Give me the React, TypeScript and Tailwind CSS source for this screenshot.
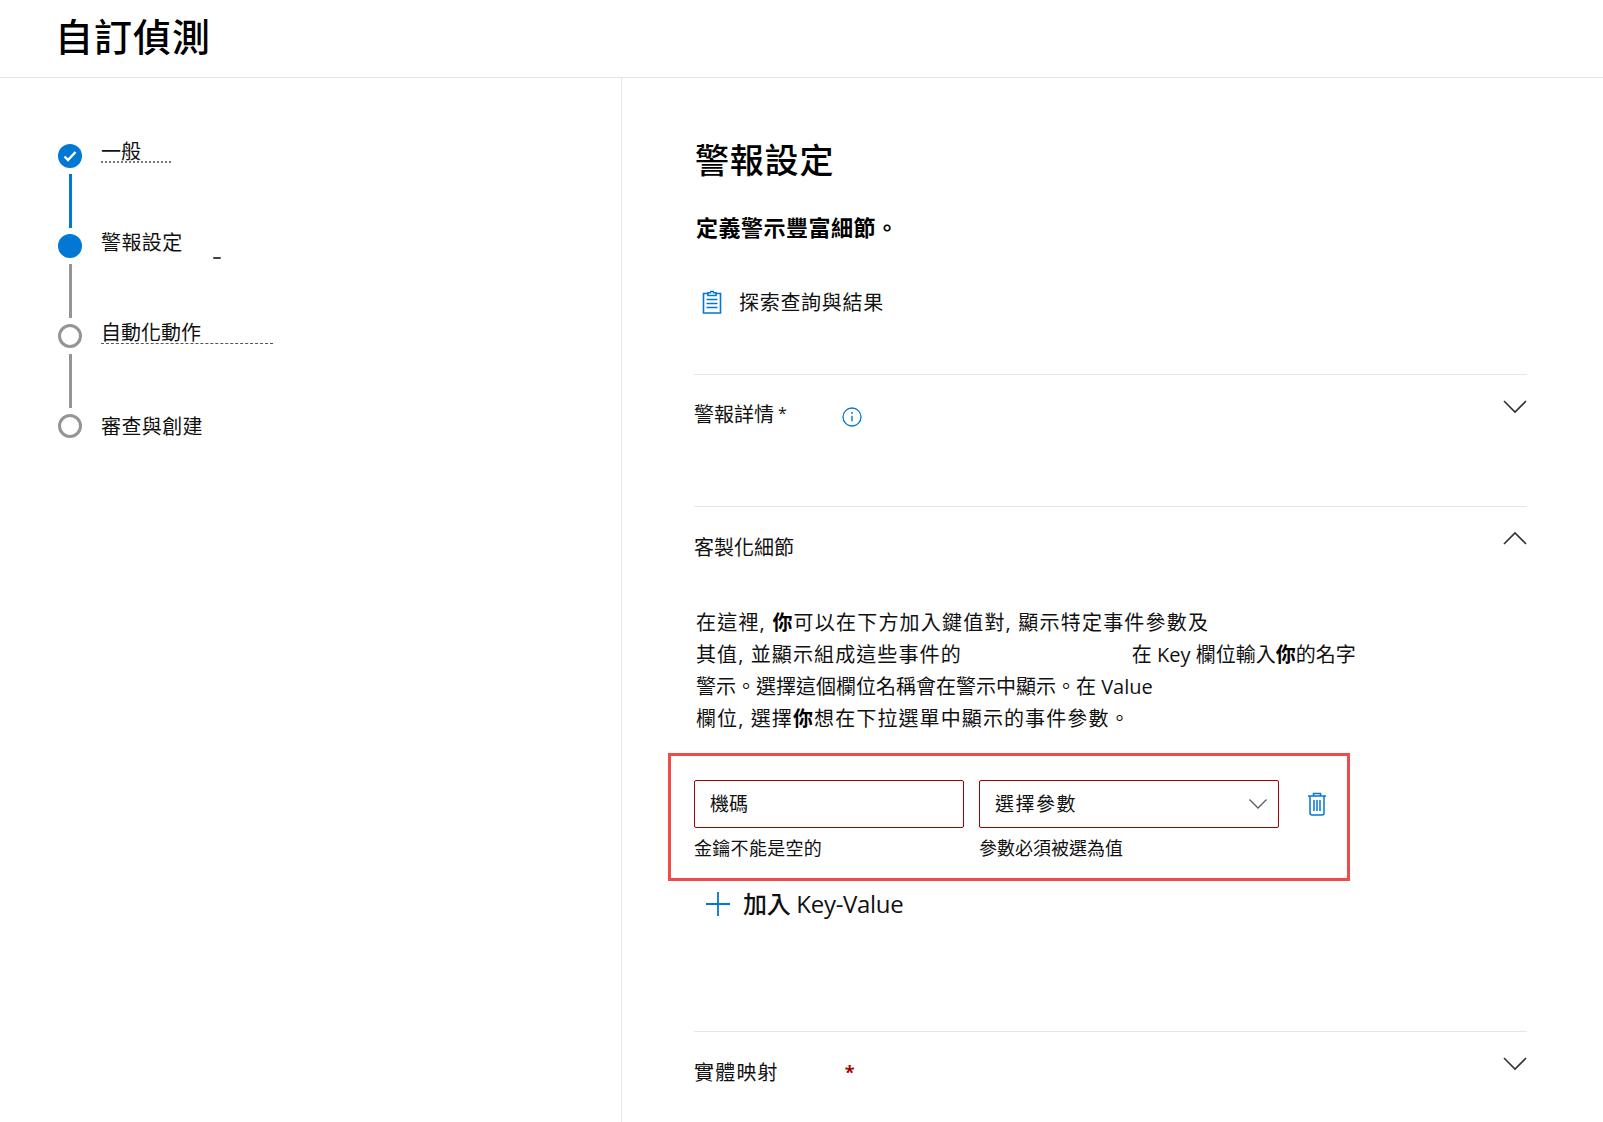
import { ReactNode } from 'react';

const FONT = 'font-["Open_Sans","Noto_Sans_CJK_TC",sans-serif]';

const Chevron = ({ up = false }: { up?: boolean }): JSX.Element => (
  <svg width="26" height="16" viewBox="0 0 26 16" fill="none" stroke="#323130" strokeWidth="1.6" className="-mr-[1px]">
    <path d={up ? 'M2 14 13 3l11 11' : 'M2 2l11 11L24 2'} />
  </svg>
);

const ClipboardIcon = (): JSX.Element => (
  <svg width="20" height="24" viewBox="0 0 20 24" fill="none" stroke="#0078d4" strokeWidth="1.6">
    <path d="M6 3.5H1.5v19.5h17V3.5H14" />
    <path d="M6 5.5V2.8h2.4a1.6 1.6 0 0 1 3.2 0H14v2.7z" />
    <path d="M4.5 9.5h11M4.5 13.5h11M4.5 17.5h11" strokeWidth="1.3" />
  </svg>
);

const InfoIcon = (): JSX.Element => (
  <svg width="20" height="20" viewBox="0 0 20 20" fill="none">
    <circle cx="10" cy="10" r="9" stroke="#0078d4" strokeWidth="1.3" />
    <path d="M10 8.8v5.4" stroke="#0078d4" strokeWidth="1.4" />
    <circle cx="10" cy="6" r="0.9" fill="#0078d4" />
  </svg>
);

const TrashIcon = (): JSX.Element => (
  <svg width="20" height="24" viewBox="0 0 20 24" fill="none" stroke="#0078d4" strokeWidth="1.5">
    <path d="M1 4h18M6.5 4V1.5h7V4" />
    <path d="M3 4v17a2 2 0 0 0 2 2h10a2 2 0 0 0 2-2V4" />
    <path d="M7 8v11M10 8v11M13 8v11" />
  </svg>
);

type Step = {
  label: string;
  state: 'done' | 'current' | 'todo';
  labelClass: string;
  trace?: ReactNode;
};

// leftovers of the untranslated labels under the steps
const STEPS: Step[] = [
  {
    label: '一般',
    state: 'done',
    labelClass: '-translate-y-[4px]',
    trace: <span className="absolute left-0 top-[17px] w-[70px] border-b-2 border-dotted border-[#777]" />,
  },
  {
    label: '警報設定',
    state: 'current',
    labelClass: '-translate-y-[3px] tracking-[0.4px]',
    trace: <span className="absolute left-[112px] top-[23px] h-[2px] w-[8px] rounded-sm bg-[#444]" />,
  },
  {
    label: '自動化動作',
    state: 'todo',
    labelClass: '-translate-y-[3px]',
    trace: <span className="absolute left-0 top-[19px] w-[172px] border-b border-dashed border-[#555]" />,
  },
  { label: '審查與創建', state: 'todo', labelClass: 'translate-y-[1px] tracking-[0.4px]' },
];

const Stepper = (): JSX.Element => (
  <div className="flex flex-col">
    {STEPS.map((step, index) => (
      <div key={step.label} className="flex gap-[19px]">
        <div className="flex w-[24px] flex-col items-center">
          {step.state === 'done' && (
            <div className="flex h-[24px] w-[24px] items-center justify-center rounded-full bg-[#0078d4]">
              <svg width="14" height="12" viewBox="0 0 14 12" fill="none" stroke="#fff" strokeWidth="2.4">
                <path d="M1.5 6.5 5 10l7.5-8" />
              </svg>
            </div>
          )}
          {step.state === 'current' && <div className="h-[24px] w-[24px] rounded-full bg-[#0078d4]" />}
          {step.state === 'todo' && <div className="h-[24px] w-[24px] rounded-full border-[3px] border-[#979593]" />}
          {index < STEPS.length - 1 && (
            <div className={`mt-[6px] mb-[6px] h-[54px] w-[3px] ${index === 0 ? 'bg-[#0078d4]' : 'bg-[#979593]'}`} />
          )}
        </div>
        <div className="relative h-[24px] flex-1">
          <span className={`block text-[20px] leading-[24px] text-[#111] ${step.labelClass}`}>{step.label}</span>
          {step.trace}
        </div>
      </div>
    ))}
  </div>
);

const Strong = ({ children }: { children: ReactNode }): JSX.Element => (
  <span className="font-bold text-black">{children}</span>
);

const App = (): JSX.Element => (
  <div className={`flex h-[1122px] w-full flex-col overflow-hidden bg-white text-[#111] ${FONT}`}>
    <header className="h-[78px] shrink-0 border-b border-[#e6e6e6] pl-[55px] pt-[12px]">
      <h1 className="text-[38px] font-medium leading-[48px] tracking-[1px] text-black">自訂偵測</h1>
    </header>
    <div className="flex min-h-0 flex-1">
      <aside className="w-[622px] shrink-0 border-r border-[#e6e6e6] pl-[58px] pt-[66px]">
        <Stepper />
      </aside>
      <main className="w-[905px] pl-[72px] pt-[62px]">
        <h2 className="pl-[1px] text-[34px] font-medium leading-[40px] tracking-[0.8px] text-black">警報設定</h2>
        <p className="mt-[31px] pl-[2px] text-[22px] font-semibold leading-[32px] tracking-[0.5px] text-black">定義警示豐富細節。</p>
        <div className="mt-[43px] flex h-[32px] items-center gap-[17px] pl-[8px]">
          <ClipboardIcon />
          <span className="translate-y-[1px] text-[20px] leading-[32px] tracking-[0.7px]">探索查詢與結果</span>
        </div>

        <section className="mt-[56px] h-[132px] border-t border-[#e6e6e6] pt-[24px]">
          <div className="flex items-start justify-between">
            <div className="flex h-[32px] items-center">
              <span className="text-[20px] leading-[32px]">警報詳情</span>
              <span className="ml-[4px] -mt-[4px] text-[16px] leading-[32px]">*</span>
              <span className="ml-[55px] mt-[3px]">
                <InfoIcon />
              </span>
            </div>
            <Chevron />
          </div>
        </section>

        <section className="border-t border-[#e6e6e6] pt-[25px]">
          <div className="flex items-start justify-between">
            <span className="text-[20px] leading-[32px]">客製化細節</span>
            <span className="-mt-[2px]">
              <Chevron up />
            </span>
          </div>
          <div className="mt-[43px] pl-[2px] text-[20px] leading-[32px]">
            <p className="tracking-[1.2px]">
              在這裡, <Strong>你</Strong>可以在下方加入鍵值對, 顯示特定事件參數及
            </p>
            <p className="tracking-[1.1px]">
              其值, 並顯示組成這些事件的
              <span className="inline-block w-[170px]" />
              <span className="tracking-normal">
                在 Key 欄位輸入<Strong>你</Strong>的名字
              </span>
            </p>
            <p className="tracking-normal">警示。選擇這個欄位名稱會在警示中顯示。在 Value</p>
            <p className="tracking-[1.1px]">
              欄位, 選擇<Strong>你</Strong>想在下拉選單中顯示的事件參數。
            </p>
          </div>

          <div className="-ml-[26px] mt-[18px] flex h-[128px] w-[682px] items-start border-[3px] border-[#f04a4a] pl-[23px] pt-[24px]">
            <div className="w-[270px]">
              <div className="flex h-[48px] items-center rounded-[2px] border border-[#a00000] pl-[15px] text-[19px]">
                機碼
              </div>
              <p className="mt-[6px] text-[18px] leading-[28px] tracking-[0.3px]">金鑰不能是空的</p>
            </div>
            <div className="ml-[15px] w-[300px]">
              <div className="flex h-[48px] items-center justify-between rounded-[2px] border border-[#a00000] pl-[15px] pr-[10px] text-[19px] tracking-[1.5px]">
                選擇參數
                <svg width="20" height="12" viewBox="0 0 20 12" fill="none" stroke="#605e5c" strokeWidth="1.3">
                  <path d="M1.5 1.5 10 10l8.5-8.5" />
                </svg>
              </div>
              <p className="mt-[6px] text-[18px] leading-[28px]">參數必須被選為值</p>
            </div>
            <div className="ml-[28px] mt-[12px]">
              <TrashIcon />
            </div>
          </div>

          <div className="mt-[7px] flex h-[32px] items-center gap-[12px] pl-[11px]">
            <svg width="26" height="26" viewBox="0 0 26 26" fill="none" stroke="#0078d4" strokeWidth="1.8">
              <path d="M13 1v24M1 13h24" />
            </svg>
            <span className="text-[24px] font-medium leading-[32px] tracking-[-0.3px]">加入 Key-Value</span>
          </div>
        </section>

        <section className="mt-[111px] border-t border-[#e6e6e6] pt-[25px]">
          <div className="flex items-start justify-between">
            <div className="flex h-[32px] items-center">
              <span className="text-[20px] leading-[32px] tracking-[1.2px]">實體映射</span>
              <span className="ml-[66px] -mt-[2px] text-[18px] font-bold leading-[32px] text-[#a80000]">*</span>
            </div>
            <span className="-mt-[1px]">
              <Chevron />
            </span>
          </div>
        </section>
      </main>
    </div>
  </div>
);

export default App;
